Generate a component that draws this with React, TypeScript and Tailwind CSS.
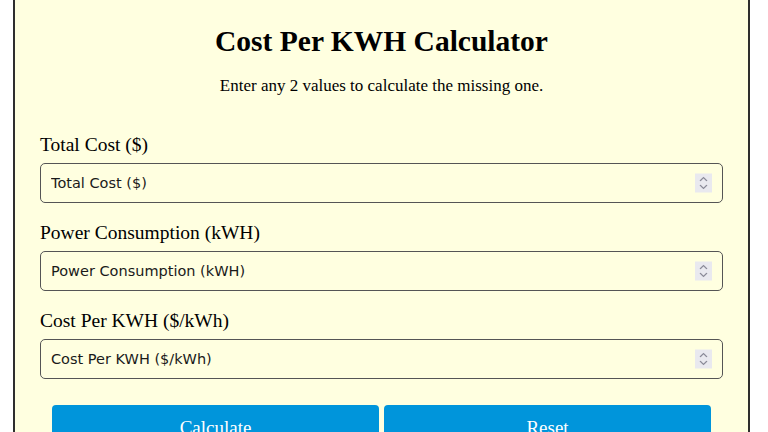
import { useState } from 'react'

const fields = [
  { key: 'cost', label: 'Total Cost ($)' },
  { key: 'power', label: 'Power Consumption (kWH)' },
  { key: 'rate', label: 'Cost Per KWH ($/kWh)' },
]

function Spinner() {
  return (
    <span className="pointer-events-none absolute right-[11px] top-1/2 -translate-y-1/2 flex h-[19px] w-[17px] flex-col items-center justify-center gap-[3px] bg-[#e9e9ef]">
      <svg width="9" height="5" viewBox="0 0 9 5" fill="none">
        <path d="M1 4.5L4.5 1L8 4.5" stroke="#8b8b99" strokeWidth="1.2" />
      </svg>
      <svg width="9" height="5" viewBox="0 0 9 5" fill="none">
        <path d="M1 0.5L4.5 4L8 0.5" stroke="#8b8b99" strokeWidth="1.2" />
      </svg>
    </span>
  )
}

export default function App() {
  const [values, setValues] = useState<Record<string, string>>({})

  return (
    <div className="min-h-screen bg-white" style={{ fontFamily: '"Liberation Serif", "Times New Roman", serif' }}>
      <div className="ml-[13px] -mt-[4px] w-[737px] border-2 border-[#2e2e2e] bg-[#ffffe0] px-[25px] pt-[26px] pb-[40px] text-black">
        <h1 className="text-center text-[29.5px] font-bold leading-[34px]">Cost Per KWH Calculator</h1>
        <p className="mt-[17px] text-center text-[17px] leading-[22px]">
          Enter any 2 values to calculate the missing one.
        </p>

        <div className="mt-[36px] flex flex-col gap-[18px]">
          {fields.map((f) => (
            <div key={f.key} className="flex flex-col">
              <label className="mb-[6px] text-[19.5px] leading-[24px]">{f.label}</label>
              <div className="relative">
                <input
                  type="number"
                  placeholder={f.label}
                  value={values[f.key] || ''}
                  onChange={(e) => setValues((prev) => ({ ...prev, [f.key]: e.target.value }))}
                  className="h-[40px] w-full rounded-[5px] border border-[#555] bg-transparent px-[10px] text-[14.5px] text-[#111] placeholder:text-[#1a1a1a] outline-none [appearance:textfield] [&::-webkit-inner-spin-button]:appearance-none [&::-webkit-outer-spin-button]:appearance-none"
                  style={{ fontFamily: '"DejaVu Sans", Verdana, sans-serif' }}
                />
                <Spinner />
              </div>
            </div>
          ))}
        </div>

        <div className="mt-[26px] flex gap-[5px] px-[12px]">
          <button className="h-[46px] flex-1 rounded-[4px] bg-[#0095db] text-[19px] text-white">Calculate</button>
          <button className="h-[46px] flex-1 rounded-[4px] bg-[#0095db] text-[19px] text-white">Reset</button>
        </div>
      </div>
    </div>
  )
}
